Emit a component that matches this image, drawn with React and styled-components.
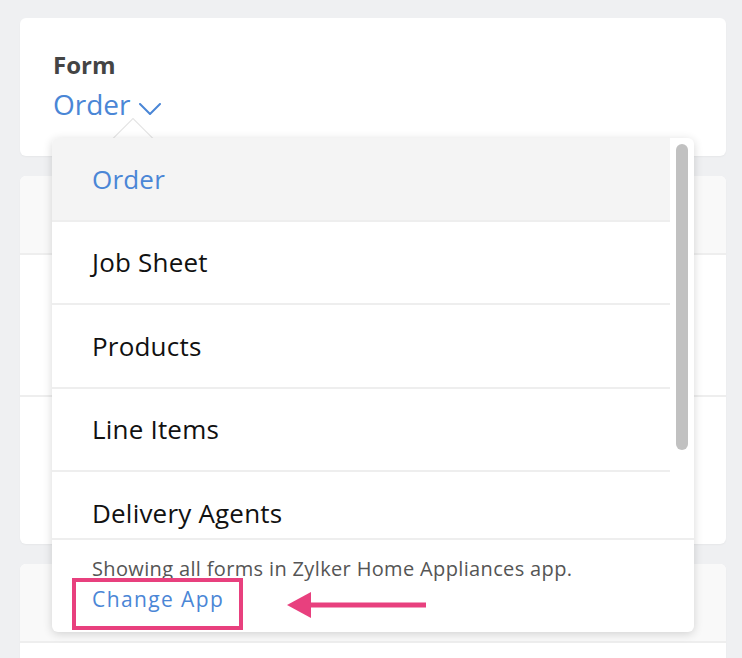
import React from "react";
import styled, { createGlobalStyle } from "styled-components";

const GlobalStyle = createGlobalStyle`
  body {
    margin: 0;
    background: #eff0f2;
    font-family: "Open Sans", "Lato", sans-serif;
    -webkit-font-smoothing: antialiased;
  }
  * { box-sizing: border-box; }
`;

const Page = styled.div`
  padding: 18px 16px 0 20px;
  height: 658px;
  overflow: hidden;
  display: flex;
  flex-direction: column;
  gap: 20px;
`;

const Card = styled.div`
  position: relative;
  background: #fff;
  border-radius: 6px;
  box-shadow: 0 1px 2px rgba(0, 0, 0, 0.04);
  flex-shrink: 0;
  height: ${(p) => p.$height || "auto"};
  overflow: ${(p) => (p.$clip ? "hidden" : "visible")};
  display: flex;
  flex-direction: column;
`;

const FormHeader = styled.div`
  padding: 31px 33px 0;
  display: flex;
  flex-direction: column;
  gap: 4px;
`;

const Label = styled.div`
  font-size: 24px;
  line-height: 32px;
  font-weight: 700;
  color: #444;
`;

const Picker = styled.div`
  display: flex;
  align-items: center;
  gap: 8px;
  font-size: 28px;
  line-height: 38px;
  color: #4a86d6;

  svg {
    margin-top: 10px;
  }
`;

const CardHead = styled.div`
  height: 79px;
  background: #f9f9f9;
  border-bottom: 2px solid #eeeeee;
  flex-shrink: 0;
`;

const CardRow = styled.div`
  height: ${(p) => p.$height}px;
  border-bottom: ${(p) => (p.$last ? "none" : "2px solid #eeeeee")};
  flex-shrink: 0;
`;

const Dropdown = styled.div`
  position: absolute;
  top: 120px;
  left: 32px;
  width: 642px;
  height: 494px;
  z-index: 10;

  &::before {
    content: "";
    position: absolute;
    z-index: -1;
    left: 66px;
    top: -14px;
    width: 28px;
    height: 28px;
    background: #fff;
    border: 1px solid #e2e2e2;
    transform: rotate(45deg);
  }
`;

const Panel = styled.div`
  height: 100%;
  background: #fff;
  border-radius: 6px;
  overflow: hidden;
  box-shadow: 0 2px 10px rgba(0, 0, 0, 0.16);
  display: flex;
  flex-direction: column;
`;

const ListArea = styled.div`
  height: 400px;
  display: flex;
  overflow: hidden;
  flex-shrink: 0;
`;

const List = styled.div`
  flex: 1;
  display: flex;
  flex-direction: column;
`;

const Item = styled.div`
  height: 83.5px;
  flex-shrink: 0;
  display: flex;
  align-items: center;
  padding-left: 40px;
  font-size: 26px;
  letter-spacing: 0.2px;
  color: ${(p) => (p.$active ? "#4a86d6" : "#111")};
  background: ${(p) => (p.$active ? "#f4f4f4" : "#fff")};
  border-bottom: 2px solid #eeeeee;
`;

const Track = styled.div`
  width: 24px;
  padding: 6px 6px 0;
  flex-shrink: 0;
`;

const Thumb = styled.div`
  height: 306px;
  border-radius: 6px;
  background: #c1c1c1;
`;

const Footer = styled.div`
  position: relative;
  flex: 1;
  border-top: 2px solid #eeeeee;
  padding: 16px 40px 0;
  display: flex;
  flex-direction: column;
`;

const Note = styled.div`
  font-size: 20px;
  letter-spacing: 0.35px;
  color: #555;
  line-height: 26px;
  margin-bottom: 3px;
  white-space: nowrap;
`;

const ChangeLink = styled.a`
  font-size: 21px;
  letter-spacing: 1.4px;
  color: #4a86d6;
  line-height: 28px;
  text-decoration: none;
  cursor: pointer;
`;

const Highlight = styled.div`
  position: absolute;
  left: 20px;
  top: 38px;
  width: 171px;
  height: 52px;
  border: 4px solid #e8407e;
`;

const Pointer = styled.svg`
  position: absolute;
  left: 235px;
  top: 52px;
`;

const items = ["Order", "Job Sheet", "Products", "Line Items", "Delivery Agents"];

const Chevron = () => (
  <svg width="22" height="12" viewBox="0 0 22 12" fill="none">
    <path d="M1 1l10 10L21 1" stroke="#4a86d6" strokeWidth="2" strokeLinecap="round" strokeLinejoin="round" />
  </svg>
);

export default function App() {
  return (
    <>
      <GlobalStyle />
      <Page>
        <Card $height="138px">
          <FormHeader>
            <Label>Form</Label>
            <Picker>
              <span>Order</span>
              <Chevron />
            </Picker>
          </FormHeader>
          <Dropdown>
            <Panel>
              <ListArea>
                <List>
                  {items.map((it, i) => (
                    <Item key={it} $active={i === 0}>
                      {it}
                    </Item>
                  ))}
                </List>
                <Track>
                  <Thumb />
                </Track>
              </ListArea>
              <Footer>
                <Note>Showing all forms in Zylker Home Appliances app.</Note>
                <ChangeLink>Change App</ChangeLink>
                <Highlight />
                <Pointer width="140" height="26" viewBox="0 0 140 26">
                  <path d="M0 13L24 0v26z" fill="#e8407e" />
                  <rect x="22" y="10.5" width="117" height="5" fill="#e8407e" />
                </Pointer>
              </Footer>
            </Panel>
          </Dropdown>
        </Card>
        <Card $height="368px" $clip>
          <CardHead />
          <CardRow $height={142} />
          <CardRow $height={147} $last />
        </Card>
        <Card $height="200px" $clip>
          <CardHead />
          <CardRow $height={120} $last />
        </Card>
      </Page>
    </>
  );
}
